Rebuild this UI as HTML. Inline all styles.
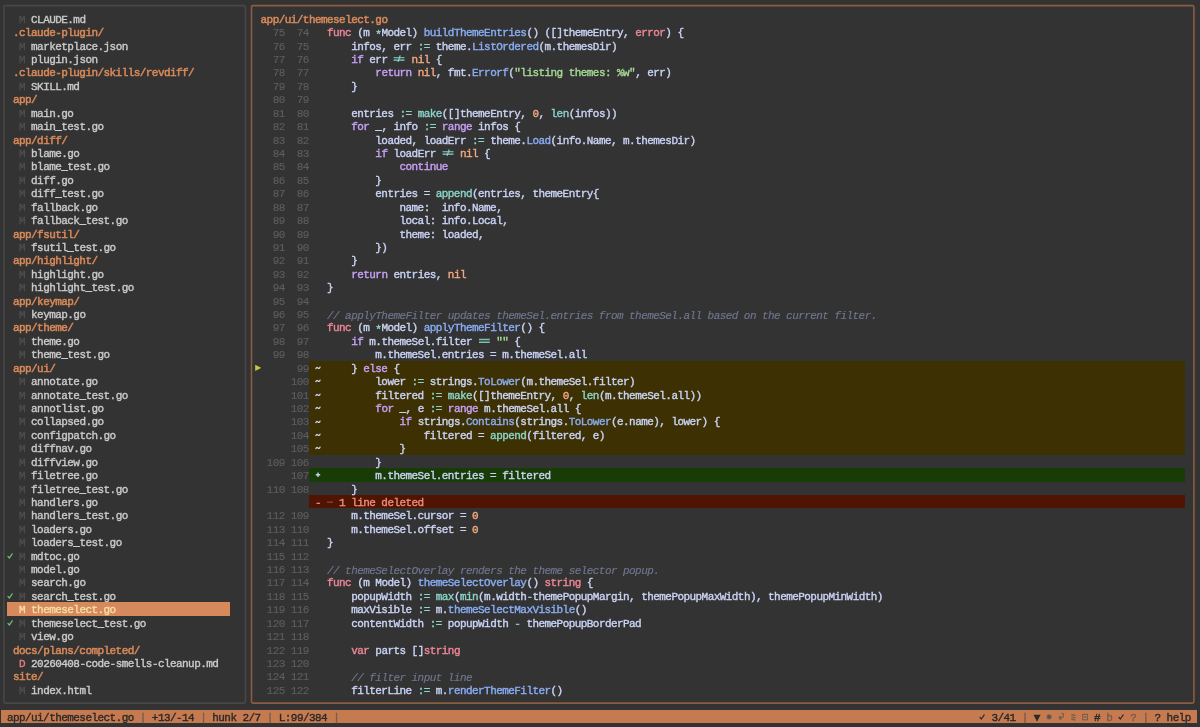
<!DOCTYPE html><html><head><meta charset="utf-8"><style>*{margin:0;padding:0}
html,body{width:1200px;height:727px;overflow:hidden;background:#333333}
.r{position:absolute;white-space:pre;transform:translateZ(0);-webkit-text-stroke-width:0.38px;font-family:"Liberation Mono",monospace;font-size:11.0px;letter-spacing:-0.560px;line-height:13.42px;height:13.42px;color:#cad3f5}
</style></head><body>
<div style="position:absolute;left:6.89px;top:602.45px;width:223.48px;height:13.42px;background:#d6895b;"></div>
<div style="position:absolute;left:308.89px;top:360.89px;width:875.80px;height:93.94px;background:#3d3104;"></div>
<div style="position:absolute;left:308.89px;top:468.25px;width:875.80px;height:13.42px;background:#173c06;"></div>
<div style="position:absolute;left:308.89px;top:495.09px;width:875.80px;height:13.42px;background:#4f1502;"></div>
<div style="position:absolute;left:0.85px;top:709.81px;width:1195.92px;height:13.42px;background:#c57a4f;"></div>
<svg style="position:absolute;left:0;top:0" width="1200" height="727"><rect x="3.9" y="5.67" width="241.60" height="697.43" rx="1.5" fill="none" stroke="#474747" stroke-width="1.6"/><rect x="251.5" y="5.67" width="942.40" height="697.43" rx="1.5" fill="none" stroke="#8a5d42" stroke-width="1.6"/></svg>
<div class="r" style="left:18.97px;top:13.81px"><span style="color:#4e4e4e;">M</span><span style="color:#cacaca;"> CLAUDE.md</span></div>
<div class="r" style="left:12.93px;top:27.23px"><span style="color:#d98a5a;-webkit-text-stroke-width:0.5px">.claude-plugin/</span></div>
<div class="r" style="left:18.97px;top:40.65px"><span style="color:#4e4e4e;">M</span><span style="color:#cacaca;"> marketplace.json</span></div>
<div class="r" style="left:18.97px;top:54.07px"><span style="color:#4e4e4e;">M</span><span style="color:#cacaca;"> plugin.json</span></div>
<div class="r" style="left:12.93px;top:67.49px"><span style="color:#d98a5a;-webkit-text-stroke-width:0.5px">.claude-plugin/skills/revdiff/</span></div>
<div class="r" style="left:18.97px;top:80.91px"><span style="color:#4e4e4e;">M</span><span style="color:#cacaca;"> SKILL.md</span></div>
<div class="r" style="left:12.93px;top:94.33px"><span style="color:#d98a5a;-webkit-text-stroke-width:0.5px">app/</span></div>
<div class="r" style="left:18.97px;top:107.75px"><span style="color:#4e4e4e;">M</span><span style="color:#cacaca;"> main.go</span></div>
<div class="r" style="left:18.97px;top:121.17px"><span style="color:#4e4e4e;">M</span><span style="color:#cacaca;"> main_test.go</span></div>
<div class="r" style="left:12.93px;top:134.59px"><span style="color:#d98a5a;-webkit-text-stroke-width:0.5px">app/diff/</span></div>
<div class="r" style="left:18.97px;top:148.01px"><span style="color:#4e4e4e;">M</span><span style="color:#cacaca;"> blame.go</span></div>
<div class="r" style="left:18.97px;top:161.43px"><span style="color:#4e4e4e;">M</span><span style="color:#cacaca;"> blame_test.go</span></div>
<div class="r" style="left:18.97px;top:174.85px"><span style="color:#4e4e4e;">M</span><span style="color:#cacaca;"> diff.go</span></div>
<div class="r" style="left:18.97px;top:188.27px"><span style="color:#4e4e4e;">M</span><span style="color:#cacaca;"> diff_test.go</span></div>
<div class="r" style="left:18.97px;top:201.69px"><span style="color:#4e4e4e;">M</span><span style="color:#cacaca;"> fallback.go</span></div>
<div class="r" style="left:18.97px;top:215.11px"><span style="color:#4e4e4e;">M</span><span style="color:#cacaca;"> fallback_test.go</span></div>
<div class="r" style="left:12.93px;top:228.53px"><span style="color:#d98a5a;-webkit-text-stroke-width:0.5px">app/fsutil/</span></div>
<div class="r" style="left:18.97px;top:241.95px"><span style="color:#4e4e4e;">M</span><span style="color:#cacaca;"> fsutil_test.go</span></div>
<div class="r" style="left:12.93px;top:255.37px"><span style="color:#d98a5a;-webkit-text-stroke-width:0.5px">app/highlight/</span></div>
<div class="r" style="left:18.97px;top:268.79px"><span style="color:#4e4e4e;">M</span><span style="color:#cacaca;"> highlight.go</span></div>
<div class="r" style="left:18.97px;top:282.21px"><span style="color:#4e4e4e;">M</span><span style="color:#cacaca;"> highlight_test.go</span></div>
<div class="r" style="left:12.93px;top:295.63px"><span style="color:#d98a5a;-webkit-text-stroke-width:0.5px">app/keymap/</span></div>
<div class="r" style="left:18.97px;top:309.05px"><span style="color:#4e4e4e;">M</span><span style="color:#cacaca;"> keymap.go</span></div>
<div class="r" style="left:12.93px;top:322.47px"><span style="color:#d98a5a;-webkit-text-stroke-width:0.5px">app/theme/</span></div>
<div class="r" style="left:18.97px;top:335.89px"><span style="color:#4e4e4e;">M</span><span style="color:#cacaca;"> theme.go</span></div>
<div class="r" style="left:18.97px;top:349.31px"><span style="color:#4e4e4e;">M</span><span style="color:#cacaca;"> theme_test.go</span></div>
<div class="r" style="left:12.93px;top:362.73px"><span style="color:#d98a5a;-webkit-text-stroke-width:0.5px">app/ui/</span></div>
<div class="r" style="left:18.97px;top:376.15px"><span style="color:#4e4e4e;">M</span><span style="color:#cacaca;"> annotate.go</span></div>
<div class="r" style="left:18.97px;top:389.57px"><span style="color:#4e4e4e;">M</span><span style="color:#cacaca;"> annotate_test.go</span></div>
<div class="r" style="left:18.97px;top:402.99px"><span style="color:#4e4e4e;">M</span><span style="color:#cacaca;"> annotlist.go</span></div>
<div class="r" style="left:18.97px;top:416.41px"><span style="color:#4e4e4e;">M</span><span style="color:#cacaca;"> collapsed.go</span></div>
<div class="r" style="left:18.97px;top:429.83px"><span style="color:#4e4e4e;">M</span><span style="color:#cacaca;"> configpatch.go</span></div>
<div class="r" style="left:18.97px;top:443.25px"><span style="color:#4e4e4e;">M</span><span style="color:#cacaca;"> diffnav.go</span></div>
<div class="r" style="left:18.97px;top:456.67px"><span style="color:#4e4e4e;">M</span><span style="color:#cacaca;"> diffview.go</span></div>
<div class="r" style="left:18.97px;top:470.09px"><span style="color:#4e4e4e;">M</span><span style="color:#cacaca;"> filetree.go</span></div>
<div class="r" style="left:18.97px;top:483.51px"><span style="color:#4e4e4e;">M</span><span style="color:#cacaca;"> filetree_test.go</span></div>
<div class="r" style="left:18.97px;top:496.93px"><span style="color:#4e4e4e;">M</span><span style="color:#cacaca;"> handlers.go</span></div>
<div class="r" style="left:18.97px;top:510.35px"><span style="color:#4e4e4e;">M</span><span style="color:#cacaca;"> handlers_test.go</span></div>
<div class="r" style="left:18.97px;top:523.77px"><span style="color:#4e4e4e;">M</span><span style="color:#cacaca;"> loaders.go</span></div>
<div class="r" style="left:18.97px;top:537.19px"><span style="color:#4e4e4e;">M</span><span style="color:#cacaca;"> loaders_test.go</span></div>
<div class="r" style="left:18.97px;top:550.61px"><span style="color:#4e4e4e;">M</span><span style="color:#cacaca;"> mdtoc.go</span></div>
<div class="r" style="left:18.97px;top:564.03px"><span style="color:#4e4e4e;">M</span><span style="color:#cacaca;"> model.go</span></div>
<div class="r" style="left:18.97px;top:577.45px"><span style="color:#4e4e4e;">M</span><span style="color:#cacaca;"> search.go</span></div>
<div class="r" style="left:18.97px;top:590.87px"><span style="color:#4e4e4e;">M</span><span style="color:#cacaca;"> search_test.go</span></div>
<div class="r" style="left:18.97px;top:604.29px"><span style="color:#f5dfa5;">M</span><span style="color:#f5dfa5;"> themeselect.go</span></div>
<div class="r" style="left:18.97px;top:617.71px"><span style="color:#4e4e4e;">M</span><span style="color:#cacaca;"> themeselect_test.go</span></div>
<div class="r" style="left:18.97px;top:631.13px"><span style="color:#4e4e4e;">M</span><span style="color:#cacaca;"> view.go</span></div>
<div class="r" style="left:12.93px;top:644.55px"><span style="color:#d98a5a;-webkit-text-stroke-width:0.5px">docs/plans/completed/</span></div>
<div class="r" style="left:18.97px;top:657.97px"><span style="color:#e87a80;">D</span><span style="color:#cacaca;"> 20260408-code-smells-cleanup.md</span></div>
<div class="r" style="left:12.93px;top:671.39px"><span style="color:#d98a5a;-webkit-text-stroke-width:0.5px">site/</span></div>
<div class="r" style="left:18.97px;top:684.81px"><span style="color:#4e4e4e;">M</span><span style="color:#cacaca;"> index.html</span></div>
<svg style="position:absolute;left:6.89px;top:548.77px" width="6.04" height="13.42" viewBox="0 0 6.04 13.41"><path d="M1 7.4 L2.4 9.0 L5.2 4.9" fill="none" stroke="#6cc070" stroke-width="1.3" stroke-linecap="round" stroke-linejoin="round"/></svg>
<svg style="position:absolute;left:6.89px;top:589.03px" width="6.04" height="13.42" viewBox="0 0 6.04 13.41"><path d="M1 7.4 L2.4 9.0 L5.2 4.9" fill="none" stroke="#6cc070" stroke-width="1.3" stroke-linecap="round" stroke-linejoin="round"/></svg>
<svg style="position:absolute;left:6.89px;top:615.87px" width="6.04" height="13.42" viewBox="0 0 6.04 13.41"><path d="M1 7.4 L2.4 9.0 L5.2 4.9" fill="none" stroke="#6cc070" stroke-width="1.3" stroke-linecap="round" stroke-linejoin="round"/></svg>
<div class="r" style="left:260.57px;top:13.81px"><span style="color:#d98a5a;-webkit-text-stroke-width:0.5px">app/ui/themeselect.go</span></div>
<div class="r" style="left:266.61px;top:27.23px"><span style="color:#5e5e5e;-webkit-text-stroke-width:0.12px"> 75  74</span></div>
<div class="r" style="left:327.01px;top:27.23px"><span style="color:#ed8796;">func</span> (m <span style="color:#8bd5ca;position:relative;top:1.6px">*</span>Model) <span style="color:#8aadf4;">buildThemeEntries</span>() ([]themeEntry, <span style="color:#ed8796;">error</span>) {</div>
<div class="r" style="left:266.61px;top:40.65px"><span style="color:#5e5e5e;-webkit-text-stroke-width:0.12px"> 76  75</span></div>
<div class="r" style="left:327.01px;top:40.65px">    infos, err <span style="color:#8bd5ca;">:=</span> theme.<span style="color:#8aadf4;">ListOrdered</span>(m.themesDir)</div>
<div class="r" style="left:266.61px;top:54.07px"><span style="color:#5e5e5e;-webkit-text-stroke-width:0.12px"> 77  76</span></div>
<svg style="position:absolute;left:393.45px;top:52.23px" width="12.08" height="13.41"><path d="M0.6 5.7 H11.5 M0.6 8.1 H11.5 M5.1 9.9 L7.2 3.4" fill="none" stroke="#8bd5ca" stroke-width="1.15"/></svg>
<div class="r" style="left:327.01px;top:54.07px">    <span style="color:#c6a0f6;">if</span> err    <span style="color:#f5a97f;">nil</span> {</div>
<div class="r" style="left:266.61px;top:67.49px"><span style="color:#5e5e5e;-webkit-text-stroke-width:0.12px"> 78  77</span></div>
<div class="r" style="left:327.01px;top:67.49px">        <span style="color:#c6a0f6;">return</span> <span style="color:#f5a97f;">nil</span>, fmt.<span style="color:#8aadf4;">Errorf</span>(<span style="color:#a6da95;">&quot;listing themes: %w&quot;</span>, err)</div>
<div class="r" style="left:266.61px;top:80.91px"><span style="color:#5e5e5e;-webkit-text-stroke-width:0.12px"> 79  78</span></div>
<div class="r" style="left:327.01px;top:80.91px">    }</div>
<div class="r" style="left:266.61px;top:94.33px"><span style="color:#5e5e5e;-webkit-text-stroke-width:0.12px"> 80  79</span></div>
<div class="r" style="left:327.01px;top:94.33px"></div>
<div class="r" style="left:266.61px;top:107.75px"><span style="color:#5e5e5e;-webkit-text-stroke-width:0.12px"> 81  80</span></div>
<div class="r" style="left:327.01px;top:107.75px">    entries <span style="color:#8bd5ca;">:=</span> <span style="color:#8bd5ca;">make</span>([]themeEntry, <span style="color:#f5a97f;">0</span>, <span style="color:#8bd5ca;">len</span>(infos))</div>
<div class="r" style="left:266.61px;top:121.17px"><span style="color:#5e5e5e;-webkit-text-stroke-width:0.12px"> 82  81</span></div>
<div class="r" style="left:327.01px;top:121.17px">    <span style="color:#c6a0f6;">for</span> _, info <span style="color:#8bd5ca;">:=</span> <span style="color:#c6a0f6;">range</span> infos {</div>
<div class="r" style="left:266.61px;top:134.59px"><span style="color:#5e5e5e;-webkit-text-stroke-width:0.12px"> 83  82</span></div>
<div class="r" style="left:327.01px;top:134.59px">        loaded, loadErr <span style="color:#8bd5ca;">:=</span> theme.<span style="color:#8aadf4;">Load</span>(info.Name, m.themesDir)</div>
<div class="r" style="left:266.61px;top:148.01px"><span style="color:#5e5e5e;-webkit-text-stroke-width:0.12px"> 84  83</span></div>
<svg style="position:absolute;left:441.77px;top:146.17px" width="12.08" height="13.41"><path d="M0.6 5.7 H11.5 M0.6 8.1 H11.5 M5.1 9.9 L7.2 3.4" fill="none" stroke="#8bd5ca" stroke-width="1.15"/></svg>
<div class="r" style="left:327.01px;top:148.01px">        <span style="color:#c6a0f6;">if</span> loadErr    <span style="color:#f5a97f;">nil</span> {</div>
<div class="r" style="left:266.61px;top:161.43px"><span style="color:#5e5e5e;-webkit-text-stroke-width:0.12px"> 85  84</span></div>
<div class="r" style="left:327.01px;top:161.43px">            <span style="color:#c6a0f6;">continue</span></div>
<div class="r" style="left:266.61px;top:174.85px"><span style="color:#5e5e5e;-webkit-text-stroke-width:0.12px"> 86  85</span></div>
<div class="r" style="left:327.01px;top:174.85px">        }</div>
<div class="r" style="left:266.61px;top:188.27px"><span style="color:#5e5e5e;-webkit-text-stroke-width:0.12px"> 87  86</span></div>
<div class="r" style="left:327.01px;top:188.27px">        entries = <span style="color:#8bd5ca;">append</span>(entries, themeEntry{</div>
<div class="r" style="left:266.61px;top:201.69px"><span style="color:#5e5e5e;-webkit-text-stroke-width:0.12px"> 88  87</span></div>
<div class="r" style="left:327.01px;top:201.69px">            name:  info.Name,</div>
<div class="r" style="left:266.61px;top:215.11px"><span style="color:#5e5e5e;-webkit-text-stroke-width:0.12px"> 89  88</span></div>
<div class="r" style="left:327.01px;top:215.11px">            local: info.Local,</div>
<div class="r" style="left:266.61px;top:228.53px"><span style="color:#5e5e5e;-webkit-text-stroke-width:0.12px"> 90  89</span></div>
<div class="r" style="left:327.01px;top:228.53px">            theme: loaded,</div>
<div class="r" style="left:266.61px;top:241.95px"><span style="color:#5e5e5e;-webkit-text-stroke-width:0.12px"> 91  90</span></div>
<div class="r" style="left:327.01px;top:241.95px">        })</div>
<div class="r" style="left:266.61px;top:255.37px"><span style="color:#5e5e5e;-webkit-text-stroke-width:0.12px"> 92  91</span></div>
<div class="r" style="left:327.01px;top:255.37px">    }</div>
<div class="r" style="left:266.61px;top:268.79px"><span style="color:#5e5e5e;-webkit-text-stroke-width:0.12px"> 93  92</span></div>
<div class="r" style="left:327.01px;top:268.79px">    <span style="color:#c6a0f6;">return</span> entries, <span style="color:#f5a97f;">nil</span></div>
<div class="r" style="left:266.61px;top:282.21px"><span style="color:#5e5e5e;-webkit-text-stroke-width:0.12px"> 94  93</span></div>
<div class="r" style="left:327.01px;top:282.21px">}</div>
<div class="r" style="left:266.61px;top:295.63px"><span style="color:#5e5e5e;-webkit-text-stroke-width:0.12px"> 95  94</span></div>
<div class="r" style="left:327.01px;top:295.63px"></div>
<div class="r" style="left:266.61px;top:309.05px"><span style="color:#5e5e5e;-webkit-text-stroke-width:0.12px"> 96  95</span></div>
<div class="r" style="left:327.01px;top:309.05px"><span style="color:#70768f;font-style:italic;position:relative;top:0.9px;-webkit-text-stroke-width:0.15px">// applyThemeFilter updates themeSel.entries from themeSel.all based on the current filter.</span></div>
<div class="r" style="left:266.61px;top:322.47px"><span style="color:#5e5e5e;-webkit-text-stroke-width:0.12px"> 97  96</span></div>
<div class="r" style="left:327.01px;top:322.47px"><span style="color:#ed8796;">func</span> (m <span style="color:#8bd5ca;position:relative;top:1.6px">*</span>Model) <span style="color:#8aadf4;">applyThemeFilter</span>() {</div>
<div class="r" style="left:266.61px;top:335.89px"><span style="color:#5e5e5e;-webkit-text-stroke-width:0.12px"> 98  97</span></div>
<svg style="position:absolute;left:478.01px;top:334.05px" width="12.08" height="13.41"><path d="M1 5.6 H11.8 M1 8.3 H11.8" fill="none" stroke="#7fbfb4" stroke-width="1.5"/></svg>
<div class="r" style="left:327.01px;top:335.89px">    <span style="color:#c6a0f6;">if</span> m.themeSel.filter    <span style="color:#a6da95;">&quot;&quot;</span> {</div>
<div class="r" style="left:266.61px;top:349.31px"><span style="color:#5e5e5e;-webkit-text-stroke-width:0.12px"> 99  98</span></div>
<div class="r" style="left:327.01px;top:349.31px">        m.themeSel.entries = m.themeSel.all</div>
<div class="r" style="left:266.61px;top:362.73px"><span style="color:#5e5e5e;-webkit-text-stroke-width:0.12px">     99</span></div>
<svg style="position:absolute;left:314.93px;top:360.89px" width="6.04" height="13.41"><path d="M0.9 7.6 Q1.6 5.8 2.9 6.9 Q4.2 8 5.0 6.2" fill="none" stroke="#cad3f5" stroke-width="1.3" stroke-linecap="round"/></svg>
<div class="r" style="left:327.01px;top:362.73px">    } <span style="color:#c6a0f6;">else</span> {</div>
<div class="r" style="left:266.61px;top:376.15px"><span style="color:#5e5e5e;-webkit-text-stroke-width:0.12px">    100</span></div>
<svg style="position:absolute;left:314.93px;top:374.31px" width="6.04" height="13.41"><path d="M0.9 7.6 Q1.6 5.8 2.9 6.9 Q4.2 8 5.0 6.2" fill="none" stroke="#cad3f5" stroke-width="1.3" stroke-linecap="round"/></svg>
<div class="r" style="left:327.01px;top:376.15px">        lower <span style="color:#8bd5ca;">:=</span> strings.<span style="color:#8aadf4;">ToLower</span>(m.themeSel.filter)</div>
<div class="r" style="left:266.61px;top:389.57px"><span style="color:#5e5e5e;-webkit-text-stroke-width:0.12px">    101</span></div>
<svg style="position:absolute;left:314.93px;top:387.73px" width="6.04" height="13.41"><path d="M0.9 7.6 Q1.6 5.8 2.9 6.9 Q4.2 8 5.0 6.2" fill="none" stroke="#cad3f5" stroke-width="1.3" stroke-linecap="round"/></svg>
<div class="r" style="left:327.01px;top:389.57px">        filtered <span style="color:#8bd5ca;">:=</span> <span style="color:#8bd5ca;">make</span>([]themeEntry, <span style="color:#f5a97f;">0</span>, <span style="color:#8bd5ca;">len</span>(m.themeSel.all))</div>
<div class="r" style="left:266.61px;top:402.99px"><span style="color:#5e5e5e;-webkit-text-stroke-width:0.12px">    102</span></div>
<svg style="position:absolute;left:314.93px;top:401.15px" width="6.04" height="13.41"><path d="M0.9 7.6 Q1.6 5.8 2.9 6.9 Q4.2 8 5.0 6.2" fill="none" stroke="#cad3f5" stroke-width="1.3" stroke-linecap="round"/></svg>
<div class="r" style="left:327.01px;top:402.99px">        <span style="color:#c6a0f6;">for</span> _, e <span style="color:#8bd5ca;">:=</span> <span style="color:#c6a0f6;">range</span> m.themeSel.all {</div>
<div class="r" style="left:266.61px;top:416.41px"><span style="color:#5e5e5e;-webkit-text-stroke-width:0.12px">    103</span></div>
<svg style="position:absolute;left:314.93px;top:414.57px" width="6.04" height="13.41"><path d="M0.9 7.6 Q1.6 5.8 2.9 6.9 Q4.2 8 5.0 6.2" fill="none" stroke="#cad3f5" stroke-width="1.3" stroke-linecap="round"/></svg>
<div class="r" style="left:327.01px;top:416.41px">            <span style="color:#c6a0f6;">if</span> strings.<span style="color:#8aadf4;">Contains</span>(strings.<span style="color:#8aadf4;">ToLower</span>(e.name), lower) {</div>
<div class="r" style="left:266.61px;top:429.83px"><span style="color:#5e5e5e;-webkit-text-stroke-width:0.12px">    104</span></div>
<svg style="position:absolute;left:314.93px;top:427.99px" width="6.04" height="13.41"><path d="M0.9 7.6 Q1.6 5.8 2.9 6.9 Q4.2 8 5.0 6.2" fill="none" stroke="#cad3f5" stroke-width="1.3" stroke-linecap="round"/></svg>
<div class="r" style="left:327.01px;top:429.83px">                filtered = <span style="color:#8bd5ca;">append</span>(filtered, e)</div>
<div class="r" style="left:266.61px;top:443.25px"><span style="color:#5e5e5e;-webkit-text-stroke-width:0.12px">    105</span></div>
<svg style="position:absolute;left:314.93px;top:441.41px" width="6.04" height="13.41"><path d="M0.9 7.6 Q1.6 5.8 2.9 6.9 Q4.2 8 5.0 6.2" fill="none" stroke="#cad3f5" stroke-width="1.3" stroke-linecap="round"/></svg>
<div class="r" style="left:327.01px;top:443.25px">            }</div>
<div class="r" style="left:266.61px;top:456.67px"><span style="color:#5e5e5e;-webkit-text-stroke-width:0.12px">109 106</span></div>
<div class="r" style="left:327.01px;top:456.67px">        }</div>
<div class="r" style="left:266.61px;top:470.09px"><span style="color:#5e5e5e;-webkit-text-stroke-width:0.12px">    107</span></div>
<svg style="position:absolute;left:314.93px;top:468.25px" width="6.04" height="13.41"><path d="M3.0 4.5 V8.9 M0.8 6.7 H5.2" fill="none" stroke="#cad3f5" stroke-width="1.35"/></svg>
<div class="r" style="left:327.01px;top:470.09px">        m.themeSel.entries = filtered</div>
<div class="r" style="left:266.61px;top:483.51px"><span style="color:#5e5e5e;-webkit-text-stroke-width:0.12px">110 108</span></div>
<div class="r" style="left:327.01px;top:483.51px">    }</div>
<div class="r" style="left:314.93px;top:496.93px"><span style="color:#f08a7a;">-   1 line deleted</span></div>
<svg style="position:absolute;left:327.01px;top:495.09px" width="6.04" height="13.41"><circle cx="1.0" cy="7.1" r="0.6" fill="#f08a7a"/><circle cx="3.0" cy="7.1" r="0.6" fill="#f08a7a"/><circle cx="5.0" cy="7.1" r="0.6" fill="#f08a7a"/></svg>
<div class="r" style="left:266.61px;top:510.35px"><span style="color:#5e5e5e;-webkit-text-stroke-width:0.12px">112 109</span></div>
<div class="r" style="left:327.01px;top:510.35px">    m.themeSel.cursor = <span style="color:#f5a97f;">0</span></div>
<div class="r" style="left:266.61px;top:523.77px"><span style="color:#5e5e5e;-webkit-text-stroke-width:0.12px">113 110</span></div>
<div class="r" style="left:327.01px;top:523.77px">    m.themeSel.offset = <span style="color:#f5a97f;">0</span></div>
<div class="r" style="left:266.61px;top:537.19px"><span style="color:#5e5e5e;-webkit-text-stroke-width:0.12px">114 111</span></div>
<div class="r" style="left:327.01px;top:537.19px">}</div>
<div class="r" style="left:266.61px;top:550.61px"><span style="color:#5e5e5e;-webkit-text-stroke-width:0.12px">115 112</span></div>
<div class="r" style="left:327.01px;top:550.61px"></div>
<div class="r" style="left:266.61px;top:564.03px"><span style="color:#5e5e5e;-webkit-text-stroke-width:0.12px">116 113</span></div>
<div class="r" style="left:327.01px;top:564.03px"><span style="color:#70768f;font-style:italic;position:relative;top:0.9px;-webkit-text-stroke-width:0.15px">// themeSelectOverlay renders the theme selector popup.</span></div>
<div class="r" style="left:266.61px;top:577.45px"><span style="color:#5e5e5e;-webkit-text-stroke-width:0.12px">117 114</span></div>
<div class="r" style="left:327.01px;top:577.45px"><span style="color:#ed8796;">func</span> (m Model) <span style="color:#8aadf4;">themeSelectOverlay</span>() <span style="color:#ed8796;">string</span> {</div>
<div class="r" style="left:266.61px;top:590.87px"><span style="color:#5e5e5e;-webkit-text-stroke-width:0.12px">118 115</span></div>
<div class="r" style="left:327.01px;top:590.87px">    popupWidth <span style="color:#8bd5ca;">:=</span> <span style="color:#8bd5ca;">max</span>(<span style="color:#8bd5ca;">min</span>(m.width<span style="color:#8bd5ca;">-</span>themePopupMargin, themePopupMaxWidth), themePopupMinWidth)</div>
<div class="r" style="left:266.61px;top:604.29px"><span style="color:#5e5e5e;-webkit-text-stroke-width:0.12px">119 116</span></div>
<div class="r" style="left:327.01px;top:604.29px">    maxVisible <span style="color:#8bd5ca;">:=</span> m.<span style="color:#8aadf4;">themeSelectMaxVisible</span>()</div>
<div class="r" style="left:266.61px;top:617.71px"><span style="color:#5e5e5e;-webkit-text-stroke-width:0.12px">120 117</span></div>
<div class="r" style="left:327.01px;top:617.71px">    contentWidth <span style="color:#8bd5ca;">:=</span> popupWidth <span style="color:#8bd5ca;">-</span> themePopupBorderPad</div>
<div class="r" style="left:266.61px;top:631.13px"><span style="color:#5e5e5e;-webkit-text-stroke-width:0.12px">121 118</span></div>
<div class="r" style="left:327.01px;top:631.13px"></div>
<div class="r" style="left:266.61px;top:644.55px"><span style="color:#5e5e5e;-webkit-text-stroke-width:0.12px">122 119</span></div>
<div class="r" style="left:327.01px;top:644.55px">    <span style="color:#ed8796;">var</span> parts []<span style="color:#ed8796;">string</span></div>
<div class="r" style="left:266.61px;top:657.97px"><span style="color:#5e5e5e;-webkit-text-stroke-width:0.12px">123 120</span></div>
<div class="r" style="left:327.01px;top:657.97px"></div>
<div class="r" style="left:266.61px;top:671.39px"><span style="color:#5e5e5e;-webkit-text-stroke-width:0.12px">124 121</span></div>
<div class="r" style="left:327.01px;top:671.39px">    <span style="color:#70768f;font-style:italic;position:relative;top:0.9px;-webkit-text-stroke-width:0.15px">// filter input line</span></div>
<div class="r" style="left:266.61px;top:684.81px"><span style="color:#5e5e5e;-webkit-text-stroke-width:0.12px">125 122</span></div>
<div class="r" style="left:327.01px;top:684.81px">    filterLine <span style="color:#8bd5ca;">:=</span> m.<span style="color:#8aadf4;">renderThemeFilter</span>()</div>
<svg style="position:absolute;left:254.53px;top:360.89px" width="6.04" height="13.41"><path d="M0.2 3.7 L6.4 6.85 L0.2 10.0 Z" fill="#cac63e"/></svg>
<div class="r" style="left:6.89px;top:711.65px"><span style="color:#2a2a2a;">app/ui/themeselect.go </span><span style="color:#7a5c4a;">|</span><span style="color:#2a2a2a;"> +13/-14 </span><span style="color:#7a5c4a;">|</span><span style="color:#2a2a2a;"> hunk 2/7 </span><span style="color:#7a5c4a;">|</span><span style="color:#2a2a2a;"> L:99/384 </span><span style="color:#7a5c4a;">|</span></div>
<div class="r" style="left:991.41px;top:711.65px"><span style="color:#2a2a2a;">3/41 </span><span style="color:#7a5c4a;">|</span><span style="color:#2a2a2a;"> ▼</span></div>
<div class="r" style="left:1094.09px;top:711.65px"><span style="color:#2a2a2a;">#</span><span style="color:#7a5c4a;"> b</span></div>
<div class="r" style="left:1130.33px;top:711.65px"><span style="color:#7a5c4a;">?</span><span style="color:#2a2a2a;"> </span><span style="color:#7a5c4a;">|</span><span style="color:#2a2a2a;"> ? help</span></div>
<svg style="position:absolute;left:979.33px;top:709.81px" width="6.04" height="13.42" viewBox="0 0 6.04 13.41"><path d="M1 7.4 L2.4 9.0 L5.2 4.9" fill="none" stroke="#2a2a2a" stroke-width="1.2" stroke-linecap="round" stroke-linejoin="round"/></svg>
<svg style="position:absolute;left:1118.25px;top:709.81px" width="6.04" height="13.42" viewBox="0 0 6.04 13.41"><path d="M1 7.4 L2.4 9.0 L5.2 4.9" fill="none" stroke="#2a2a2a" stroke-width="1.2" stroke-linecap="round" stroke-linejoin="round"/></svg>
<svg style="position:absolute;left:1045.77px;top:709.81px" width="6.04" height="13.41" viewBox="0 0 6.04 13.41"><circle cx="3.1" cy="6.8" r="2.6" fill="#7a5c4a"/><circle cx="3.1" cy="6.8" r="1.3" fill="#4f5258"/></svg>
<svg style="position:absolute;left:1057.85px;top:709.81px" width="6.04" height="13.41" viewBox="0 0 6.04 13.41"><path d="M4.0 3.4 Q6.0 3.6 5.7 5.7 Q5.3 7.8 3.2 7.8 L1.2 7.8 M2.6 6.3 L1.1 7.8 L2.6 9.3" fill="none" stroke="#7a5c4a" stroke-width="1.25" stroke-linecap="round" stroke-linejoin="round"/></svg>
<svg style="position:absolute;left:1069.93px;top:709.81px" width="6.04" height="13.41" viewBox="0 0 6.04 13.41"><path d="M1.2 4.7 L2.6 4.7 L3.6 5.3 L5.6 5.3 M1.2 7.0 L2.6 7.0 L3.6 7.6 L5.6 7.6 M1.2 9.2 L2.6 9.2 L3.6 9.8 L5.6 9.8" fill="none" stroke="#7a5c4a" stroke-width="1.2"/></svg>
<svg style="position:absolute;left:1082.01px;top:709.81px" width="6.04" height="13.41" viewBox="0 0 6.04 13.41"><rect x="0.7" y="4.4" width="4.9" height="5.4" fill="none" stroke="#7a5c4a" stroke-width="1.1"/><path d="M1.8 7.1 L4.5 7.1" stroke="#7a5c4a" stroke-width="1.2"/></svg>
</body></html>
